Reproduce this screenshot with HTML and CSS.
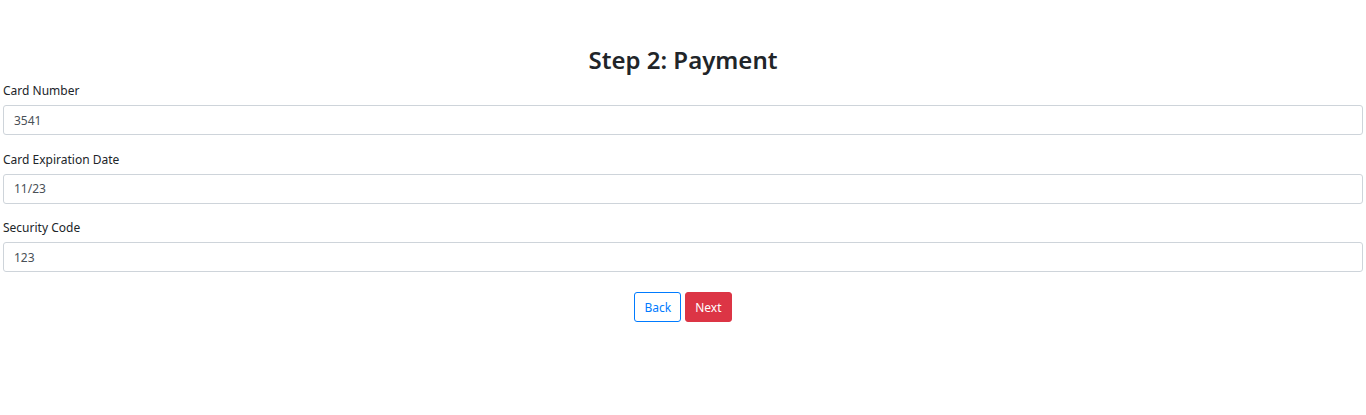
FILE: index.html
```html
<!DOCTYPE html>
<html>
<head>
<meta charset="utf-8">
<link rel="stylesheet" href="styles.css">
</head>
<body>
<div class="wizard">
  <h2 class="title">Step 2: Payment</h2>
  <form class="form">
    <div class="group">
      <label class="label">Card Number</label>
      <input class="input" type="text" value="3541">
    </div>
    <div class="group">
      <label class="label">Card Expiration Date</label>
      <input class="input" type="text" value="11/23">
    </div>
    <div class="group">
      <label class="label">Security Code</label>
      <input class="input" type="text" value="123">
    </div>
    <div class="actions">
      <button type="button" class="btn btn-outline">Back</button>
      <button type="button" class="btn btn-danger">Next</button>
    </div>
  </form>
</div>
</body>
</html>
```
FILE: styles.css
```css
* { box-sizing: border-box; }
body {
  margin: 0;
  background: #fff;
  color: #212529;
  font-family: "Noto Sans", "Open Sans", sans-serif;
}
.wizard {
  padding: 44px 3px 0;
}
.title {
  margin: 0 0 6px;
  text-align: center;
  font-size: 24px;
  line-height: 32px;
  font-weight: 600;
  color: #212529;
}
.group {
  display: flex;
  flex-direction: column;
  margin-bottom: 15.5px;
}
.label {
  font-size: 12px;
  line-height: 18px;
  margin-bottom: 5px;
}
.input {
  height: 30px;
  width: 100%;
  border: 1px solid #ced4da;
  border-radius: 3px;
  padding: 0 10px;
  font-family: inherit;
  font-size: 12px;
  color: #495057;
}
.actions {
  display: flex;
  justify-content: center;
  gap: 4px;
  margin-top: 20px;
}
.btn {
  height: 30px;
  padding: 0 9px;
  border-radius: 3px;
  font-family: inherit;
  font-size: 12px;
  cursor: pointer;
}
.btn-outline {
  background: #fff;
  border: 1px solid #007bff;
  color: #007bff;
}
.btn-danger {
  background: #dc3545;
  border: 1px solid #dc3545;
  color: #fff;
}
```
